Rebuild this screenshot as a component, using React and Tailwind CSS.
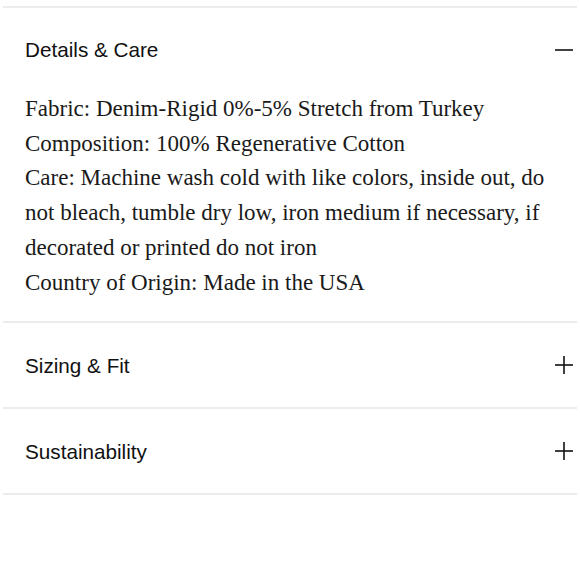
import { useState } from 'react'

const sections = [
  {
    title: 'Details & Care',
    lines: [
      'Fabric: Denim-Rigid 0%-5% Stretch from Turkey',
      'Composition: 100% Regenerative Cotton',
      'Care: Machine wash cold with like colors, inside out, do not bleach, tumble dry low, iron medium if necessary, if decorated or printed do not iron',
      'Country of Origin: Made in the USA',
    ],
  },
  { title: 'Sizing & Fit', lines: [] },
  { title: 'Sustainability', lines: [] },
]

function Toggle({ open }) {
  return (
    <svg width="18" height="18" viewBox="0 0 18 18" className="text-[#111]">
      <line x1="0" y1="9" x2="18" y2="9" stroke="currentColor" strokeWidth="1.6" />
      {!open && <line x1="9" y1="0" x2="9" y2="18" stroke="currentColor" strokeWidth="1.6" />}
    </svg>
  )
}

export default function App() {
  const [open, setOpen] = useState(0)

  return (
    <div className="min-h-[580px] bg-white pt-[6px]">
      <div className="mx-[3px] border-t-2 border-[#ececec]">
        {sections.map((s, i) => (
          <div key={s.title} className="border-b-2 border-[#ececec]">
            <button
              onClick={() => setOpen(open === i ? -1 : i)}
              className="w-full h-[84px] flex items-center justify-between pl-[22px] pr-[4px] text-left"
            >
              <span className="text-[20.7px] text-[#111] font-['Liberation_Sans',Arial,sans-serif]">
                {s.title}
              </span>
              <Toggle open={open === i} />
            </button>
            {open === i && (
              <div className="pl-[22px] pr-[30px] pb-[21px] text-[23px] leading-[34.7px] text-[#1a1a1a] font-['Liberation_Serif','Times_New_Roman',serif]">
                {s.lines.map((l) => (
                  <p key={l}>{l}</p>
                ))}
              </div>
            )}
          </div>
        ))}
      </div>
    </div>
  )
}
